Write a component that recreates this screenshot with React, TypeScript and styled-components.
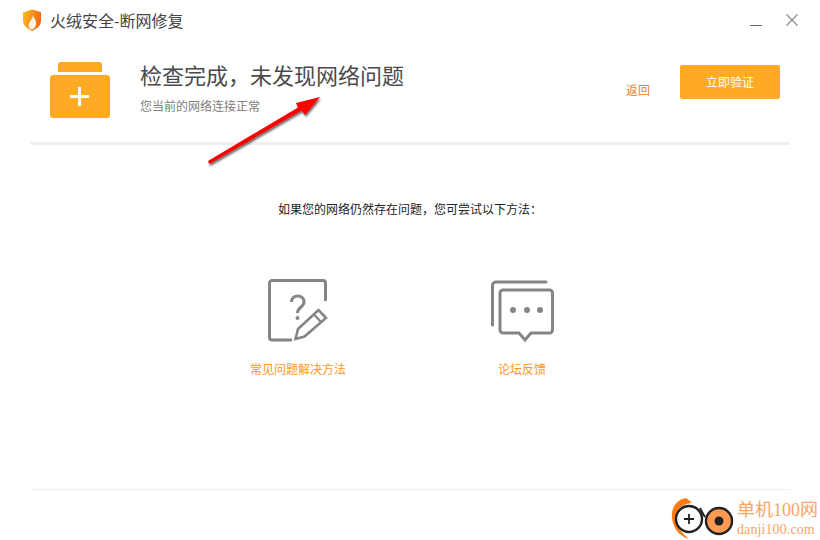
import React from "react";
import styled, { createGlobalStyle } from "styled-components";

const Global = createGlobalStyle`
  html, body { margin: 0; padding: 0; background: #fff; }
  * { box-sizing: border-box; }
`;

const Window = styled.div`
  position: relative;
  width: 820px;
  height: 540px;
  overflow: hidden;
  background: #fff;
  font-family: "Noto Sans CJK SC", "Liberation Sans", sans-serif;
  display: flex;
  flex-direction: column;
`;

const TitleBar = styled.div`
  height: 42px;
  padding: 0 22px 2px 23px;
  display: flex;
  align-items: center;
`;

const AppName = styled.div`
  margin-left: 9px;
  font-size: 16px;
  line-height: 20px;
  color: #444;
`;

const WinButtons = styled.div`
  margin-left: auto;
  display: flex;
  align-items: center;
  gap: 24px;
`;

const Header = styled.div`
  height: 103px;
  margin: 0 30px;
  padding: 20px 10px 0 20px;
  display: flex;
  align-items: flex-start;
  border-bottom: 3px solid #f0f0f0;
  border-radius: 0 0 2px 2px;
`;

const HeaderText = styled.div`
  margin: -3px 0 0 30px;
  flex: 1;
`;

const Title = styled.div`
  font-size: 22px;
  line-height: 30px;
  color: #4a4a4a;
`;

const SubTitle = styled.div`
  margin-top: 9px;
  font-size: 12px;
  line-height: 16px;
  color: #808080;
`;

const BackLink = styled.a`
  margin-top: 20px;
  margin-right: 30px;
  font-size: 12px;
  line-height: 16px;
  color: #f08020;
`;

const VerifyButton = styled.button`
  width: 100px;
  height: 34px;
  margin-top: 3px;
  border: 0;
  border-radius: 2px;
  background: #ffaa25;
  color: #fff;
  font-family: inherit;
  font-size: 12px;
  padding: 0 0 2px;
`;

const Hint = styled.div`
  margin-top: 55px;
  text-align: center;
  font-size: 12px;
  line-height: 18px;
  color: #222;
`;

const Methods = styled.div`
  margin-top: 61px;
  display: flex;
  padding-left: 208px;
`;

const Method = styled.div`
  width: 180px;
  margin-right: 44px;
  display: flex;
  flex-direction: column;
  align-items: center;
`;

const MethodIcon = styled.div`
  height: 64px;
  display: flex;
  align-items: center;
  justify-content: center;
`;

const MethodLabel = styled.div`
  margin-top: 18px;
  font-size: 12px;
  line-height: 16px;
  color: #ff961a;
`;

const Footer = styled.div`
  margin: auto 30px 50px;
  border-top: 1px solid #eee;
`;

const ArrowOverlay = styled.svg`
  position: absolute;
  left: 200px;
  top: 90px;
`;

const Watermark = styled.div`
  position: absolute;
  left: 670px;
  top: 496px;
  display: flex;
  align-items: flex-start;
`;

const MarkText = styled.div`
  margin: 3px 0 0 1px;
  color: #f9a468;
  font-family: "Liberation Serif", "Noto Sans CJK SC", serif;
`;

const MarkName = styled.div`
  font-size: 18px;
  line-height: 23px;
  white-space: nowrap;
`;

const MarkUrl = styled.div`
  font-size: 14px;
  line-height: 16px;
  white-space: nowrap;
  letter-spacing: 0.1px;
`;

const ShieldLogo = () => (
  <svg width="18" height="22" viewBox="0 0 18 22">
    <defs>
      <linearGradient id="sh" x1="0" y1="0" x2="1" y2="0.3">
        <stop offset="0" stopColor="#ffc21a" />
        <stop offset="1" stopColor="#ee6a18" />
      </linearGradient>
    </defs>
    <path d="M0 3.5 L9 0.5 L18 3 V12 C18 17 13 20 9 22 C5 20 0 17 0 12 Z" fill="url(#sh)" />
    <path d="M10 6 C11 10 14 12 13 16 C12 19 10 20.5 8.5 20.5 C6 20 5 17 6 14.5 C7 12 9.5 10 10 6 Z" fill="#fff3e0" />
  </svg>
);

const FolderIcon = () => (
  <svg width="60" height="56" viewBox="0 0 60 56">
    <path d="M8 3 a3 3 0 0 1 3 -3 h38 a3 3 0 0 1 3 3 v7 H8 Z" fill="#ffaa25" />
    <rect x="0" y="13" width="60" height="43" rx="3" fill="#ffaa25" />
    <rect x="20" y="33" width="19" height="3" fill="#fff" />
    <rect x="28" y="25" width="3" height="19" fill="#fff" />
  </svg>
);

const HelpIcon = () => (
  <svg width="60" height="64" viewBox="0 0 60 64" fill="none" stroke="#858585" strokeWidth="3">
    <path d="M24 61 H4 a2.5 2.5 0 0 1 -2.5 -2.5 V4 a2.5 2.5 0 0 1 2.5 -2.5 H55 a2.5 2.5 0 0 1 2.5 2.5 V22" />
    <path d="M23.5 23 C23.5 15 36 15 36 23 C36 28.5 29.5 28 29.5 34" />
    <circle cx="29.5" cy="39" r="2" fill="#858585" stroke="none" />
    <path d="M27.5 60 L30 50 L50.5 31 L58 39 L36.5 57.5 Z" strokeWidth="2.6" strokeLinejoin="miter" />
    <path d="M46 35.5 L53.5 43.5" strokeWidth="2.2" />
  </svg>
);

const ForumIcon = () => (
  <svg width="64" height="64" viewBox="0 0 64 64" fill="none" stroke="#858585" strokeWidth="3">
    <path d="M2.5 46 V6.5 a3.5 3.5 0 0 1 3.5 -3.5 H56" strokeLinecap="round" />
    <path d="M13 11 H59.5 a3 3 0 0 1 3 3 V51 a3 3 0 0 1 -3 3 H41 L35 61 L29 54 H13 a3 3 0 0 1 -3 -3 V14 a3 3 0 0 1 3 -3 Z" />
    <g fill="#858585" stroke="none">
      <circle cx="23" cy="31" r="3" />
      <circle cx="37" cy="31" r="3" />
      <circle cx="50" cy="31" r="3" />
    </g>
  </svg>
);

const SiteLogo = () => (
  <svg width="66" height="44" viewBox="0 0 66 44" fill="none">
    <path d="M16 2 C6 4 1 12 2 22 C3 32 9 40 19 43 C12 37 6 31 6 22 C6 13 12 8 22 7 C20 5 18 3 16 2 Z" fill="#ff7a12" />
    <circle cx="19" cy="23" r="13" stroke="#222" strokeWidth="2.4" fill="#fff" />
    <path d="M14 23 H24 M19 18 V28" stroke="#222" strokeWidth="1.8" />
    <circle cx="49" cy="25" r="13" stroke="#222" strokeWidth="2.4" fill="#ff9a50" />
    <circle cx="49" cy="25" r="4.5" fill="#222" />
    <path d="M30 12 C32 16 33 18 35 21" stroke="#222" strokeWidth="2" />
  </svg>
);

export default function App() {
  return (
    <Window>
      <Global />
      <TitleBar>
        <ShieldLogo />
        <AppName>火绒安全-断网修复</AppName>
        <WinButtons>
          <svg width="12" height="12" viewBox="0 0 12 12">
            <path d="M0 11.5 H12" stroke="#666" strokeWidth="1" />
          </svg>
          <svg width="12" height="12" viewBox="0 0 12 12">
            <path d="M0.5 0.5 L11.5 11.5 M11.5 0.5 L0.5 11.5" stroke="#888" strokeWidth="1.1" />
          </svg>
        </WinButtons>
      </TitleBar>
      <Header>
        <FolderIcon />
        <HeaderText>
          <Title>检查完成，未发现网络问题</Title>
          <SubTitle>您当前的网络连接正常</SubTitle>
        </HeaderText>
        <BackLink>返回</BackLink>
        <VerifyButton>立即验证</VerifyButton>
      </Header>
      <Hint>如果您的网络仍然存在问题，您可尝试以下方法：</Hint>
      <Methods>
        <Method>
          <MethodIcon><HelpIcon /></MethodIcon>
          <MethodLabel>常见问题解决方法</MethodLabel>
        </Method>
        <Method>
          <MethodIcon><ForumIcon /></MethodIcon>
          <MethodLabel>论坛反馈</MethodLabel>
        </Method>
      </Methods>
      <Footer />
      <ArrowOverlay width="130" height="84" viewBox="0 0 130 84">
        <defs>
          <filter id="as" x="-20%" y="-20%" width="140%" height="160%">
            <feDropShadow dx="1" dy="2" stdDeviation="1.3" floodColor="#000" floodOpacity="0.6" />
          </filter>
        </defs>
        <path d="M8 71 L98 17.5 L96 13 L120 7 L105 25 L101.5 20.5 L9.5 74 Z" fill="#f00" filter="url(#as)" />
      </ArrowOverlay>
      <Watermark>
        <SiteLogo />
        <MarkText>
          <MarkName>单机100网</MarkName>
          <MarkUrl>danji100.com</MarkUrl>
        </MarkText>
      </Watermark>
    </Window>
  );
}
